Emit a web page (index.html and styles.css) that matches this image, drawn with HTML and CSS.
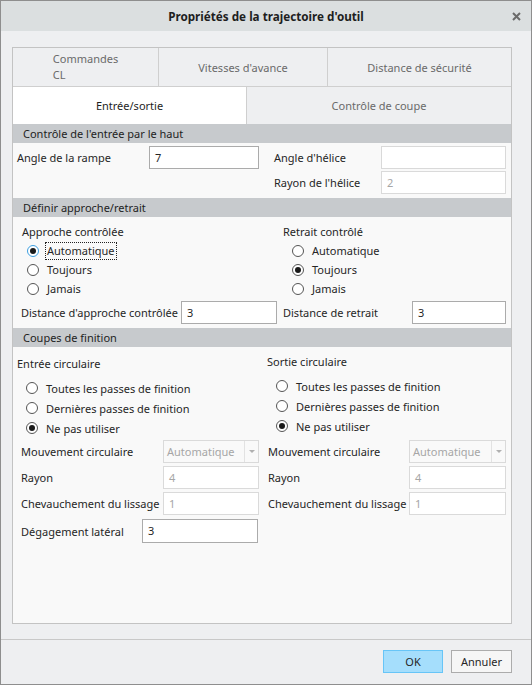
FILE: index.html
```html
<!DOCTYPE html>
<html lang="fr">
<head>
<meta charset="utf-8">
<title>Propriétés de la trajectoire d'outil</title>
<link rel="stylesheet" href="styles.css">
</head>
<body>
<div class="window">
  <div class="titlebar">
    <span></span>
    <span class="title">Propriétés de la trajectoire d'outil</span>
    <span class="close">
      <svg width="9" height="9" viewBox="0 0 9 9"><path d="M1 1L8 8M8 1L1 8" stroke="#6b6b6b" stroke-width="2"/></svg>
    </span>
  </div>

  <div class="content">
    <div class="panel">
      <div class="tabs tabs-top">
        <div class="tab"><span class="tab-wrap">Commandes<br>CL</span></div>
        <div class="tab">Vitesses d'avance</div>
        <div class="tab">Distance de sécurité</div>
      </div>
      <div class="tabs tabs-bottom">
        <div class="tab active">Entrée/sortie</div>
        <div class="tab">Contrôle de coupe</div>
      </div>

      <div class="section-head">Contrôle de l'entrée par le haut</div>
      <div class="section sec-entry">
        <span class="label">Angle de la rampe</span>
        <span class="field">7</span>
        <span></span>
        <span class="label">Angle d'hélice</span>
        <span class="field light"></span>
        <span></span><span></span><span></span>
        <span class="label">Rayon de l'hélice</span>
        <span class="field disabled">2</span>
      </div>

      <div class="section-head">Définir approche/retrait</div>
      <div class="section sec-approach">
        <div class="group group-left">
          <div class="group-title">Approche contrôlée</div>
          <div class="radio"><span class="dot checked focus"></span><span class="focus-text">Automatique</span></div>
          <div class="radio"><span class="dot"></span>Toujours</div>
          <div class="radio"><span class="dot"></span>Jamais</div>
        </div>
        <div class="group group-right">
          <div class="group-title">Retrait contrôlé</div>
          <div class="radio"><span class="dot"></span>Automatique</div>
          <div class="radio"><span class="dot checked"></span>Toujours</div>
          <div class="radio"><span class="dot"></span>Jamais</div>
        </div>
        <div class="dist-row dist-left">
          <span class="label">Distance d'approche contrôlée</span>
          <span class="field w-approach">3</span>
        </div>
        <div class="dist-row dist-right">
          <span class="label">Distance de retrait</span>
          <span class="field w-retract">3</span>
        </div>
      </div>

      <div class="section-head">Coupes de finition</div>
      <div class="section sec-finish">
        <div class="finish-groups">
          <div class="group fin-left">
            <div class="group-title">Entrée circulaire</div>
            <div class="radio tall"><span class="dot"></span>Toutes les passes de finition</div>
            <div class="radio tall"><span class="dot"></span>Dernières passes de finition</div>
            <div class="radio tall"><span class="dot checked"></span>Ne pas utiliser</div>
          </div>
          <div class="group fin-right">
            <div class="group-title">Sortie circulaire</div>
            <div class="radio tall"><span class="dot"></span>Toutes les passes de finition</div>
            <div class="radio tall"><span class="dot"></span>Dernières passes de finition</div>
            <div class="radio tall"><span class="dot checked"></span>Ne pas utiliser</div>
          </div>
        </div>
        <div class="finish-grid">
          <span class="label">Mouvement circulaire</span>
          <span class="combo"><span class="combo-text">Automatique</span><span class="combo-arrow"></span></span>
          <span></span>
          <span class="label">Mouvement circulaire</span>
          <span class="combo"><span class="combo-text">Automatique</span><span class="combo-arrow"></span></span>

          <span class="label">Rayon</span>
          <span class="field disabled">4</span>
          <span></span>
          <span class="label">Rayon</span>
          <span class="field disabled">4</span>

          <span class="label">Chevauchement du lissage</span>
          <span class="field disabled">1</span>
          <span></span>
          <span class="label">Chevauchement du lissage</span>
          <span class="field disabled">1</span>
        </div>
        <div class="clear-row">
          <span class="label">Dégagement latéral</span>
          <span class="field w-clear">3</span>
        </div>
      </div>
    </div>
  </div>

  <div class="footer">
    <button class="btn btn-ok">OK</button>
    <button class="btn">Annuler</button>
  </div>
</div>
</body>
</html>
```

FILE: styles.css
```css
html, body {
	margin: 0;
	padding: 0;
	background: #eeeff1;
}
body {
	font-family: "Noto Sans", "Open Sans", sans-serif;
	font-size: 11px;
	color: #262626;
}
.window {
	width: 532px;
	height: 685px;
	box-sizing: border-box;
	border: 1px solid #8e8e8e;
	background: #eeeff1;
	display: flex;
	flex-direction: column;
}

/* title bar */
.titlebar {
	height: 30px;
	background: #dbdfe0;
	display: grid;
	grid-template-columns: 1fr auto 1fr;
	align-items: center;
}
.title {
	font-weight: bold;
	font-size: 11.7px;
	color: #1e1e1e;
}
.close {
	justify-self: end;
	margin-right: 10px;
	display: flex;
}

/* main panel */
.content {
	flex: 1;
	display: flex;
	padding: 16px 19px 15px 11px;
}
.panel {
	flex: 1;
	border: 1px solid #c3c3c3;
	background: #f9f9f9;
	display: flex;
	flex-direction: column;
}

.tabs {
	display: grid;
	background: #eeeff1;
	color: #6a6a6a;
}
.tabs-top {
	grid-template-columns: 145px 169px 1fr;
	height: 38px;
	border-bottom: 1px solid #cfcfcf;
}
.tabs-bottom {
	grid-template-columns: 233px 1fr;
	height: 37px;
}
.tab {
	display: flex;
	align-items: center;
	justify-content: center;
}
.tab + .tab {
	border-left: 1px solid #cfcfcf;
}
.tab-wrap {
	display: inline-block;
	text-align: left;
	line-height: 16px;
}
.tab.active {
	background: #ffffff;
	color: #1e1e1e;
}

.section-head {
	height: 19px;
	line-height: 19px;
	background: #c7cacd;
	padding-left: 10px;
	color: #1e1e1e;
}

/* form parts */
.label {
	white-space: nowrap;
}
.field {
	box-sizing: border-box;
	height: 23px;
	line-height: 21px;
	background: #ffffff;
	border: 1px solid #ababab;
	padding-left: 5px;
}
.field.light {
	border-color: #d9d9d9;
}
.field.disabled {
	border-color: #dadada;
	color: #a6a6a6;
}

.sec-entry {
	display: grid;
	grid-template-columns: 132px 110px 15px 107px 125px;
	grid-auto-rows: 23px;
	row-gap: 2px;
	align-items: center;
	padding: 3px 0 4px 4px;
}

.sec-approach {
	display: grid;
	grid-template-columns: 270px 1fr;
	padding: 6px 5px 4px 0;
}
.group-title {
	line-height: 18px;
}
.radio {
	display: flex;
	align-items: center;
	height: 19px;
}
.radio.tall {
	height: 20px;
}
.dot {
	box-sizing: border-box;
	width: 12px;
	height: 12px;
	border: 1px solid #555555;
	border-radius: 50%;
	background: #ffffff;
	margin-right: 8px;
	display: flex;
	align-items: center;
	justify-content: center;
}
.dot.checked::after {
	content: "";
	width: 6px;
	height: 6px;
	border-radius: 50%;
	background: #1a1a1a;
}
.dot.focus {
	border-color: #3d9fe0;
}
.focus-text {
	outline: 1px dotted #222;
	padding: 0 1px;
	line-height: 16px;
	margin-left: -1px;
}
.group-left {
	padding-left: 9px;
}
.group-left .radio {
	padding-left: 5px;
}
.group-right .radio {
	padding-left: 9px;
}
.dist-row {
	display: flex;
	align-items: center;
	margin-top: 3px;
}
.dist-left {
	padding: 0 6px 0 8px;
}
.w-approach {
	width: 96px;
	margin-left: auto;
}
.w-retract {
	width: 94px;
	margin-left: auto;
}

.sec-finish {
	flex: 1;
}
.finish-groups {
	display: grid;
	grid-template-columns: 254px 1fr;
}
.fin-left {
	padding: 8px 0 0 4px;
}
.fin-left .radio {
	padding-left: 9px;
}
.fin-left .group-title {
	margin-bottom: 5px;
}
.fin-right {
	padding-top: 6px;
}
.fin-right .radio {
	padding-left: 9px;
}
.fin-right .group-title {
	margin-bottom: 5px;
}

.finish-grid {
	display: grid;
	grid-template-columns: 142px 96px 9px 141px 97px;
	grid-auto-rows: 23px;
	row-gap: 3px;
	align-items: center;
	padding-left: 8px;
	margin-top: 2px;
}
.combo {
	box-sizing: border-box;
	height: 23px;
	border: 1px solid #dadada;
	background: #f9f9f9;
	display: flex;
	color: #a6a6a6;
}
.combo-text {
	flex: 1;
	line-height: 21px;
	padding-left: 3px;
}
.combo-arrow {
	width: 13px;
	border-left: 1px solid #e2e2e2;
	display: flex;
	align-items: center;
	justify-content: center;
}
.combo-arrow::after {
	content: "";
	border-left: 3px solid transparent;
	border-right: 3px solid transparent;
	border-top: 3px solid #b0b0b0;
}
.clear-row {
	display: flex;
	align-items: center;
	padding-left: 8px;
	margin-top: 4px;
}
.w-clear {
	width: 116px;
	height: 24px;
	margin-left: auto;
	margin-right: 253px;
}

/* buttons */
.footer {
	height: 45px;
	box-sizing: border-box;
	border-top: 1px solid #c8c8c8;
	display: flex;
	justify-content: flex-end;
	gap: 8px;
	padding: 10px 19px 0 0;
}
.btn {
	font-family: inherit;
	font-size: 11px;
	height: 23px;
	width: 61px;
	border: 1px solid #acacac;
	background: #f6f6f6;
	color: #262626;
	padding: 0;
}
.btn-ok {
	width: 60px;
	background: #a5defc;
	border-color: #67c5f7;
}
```
